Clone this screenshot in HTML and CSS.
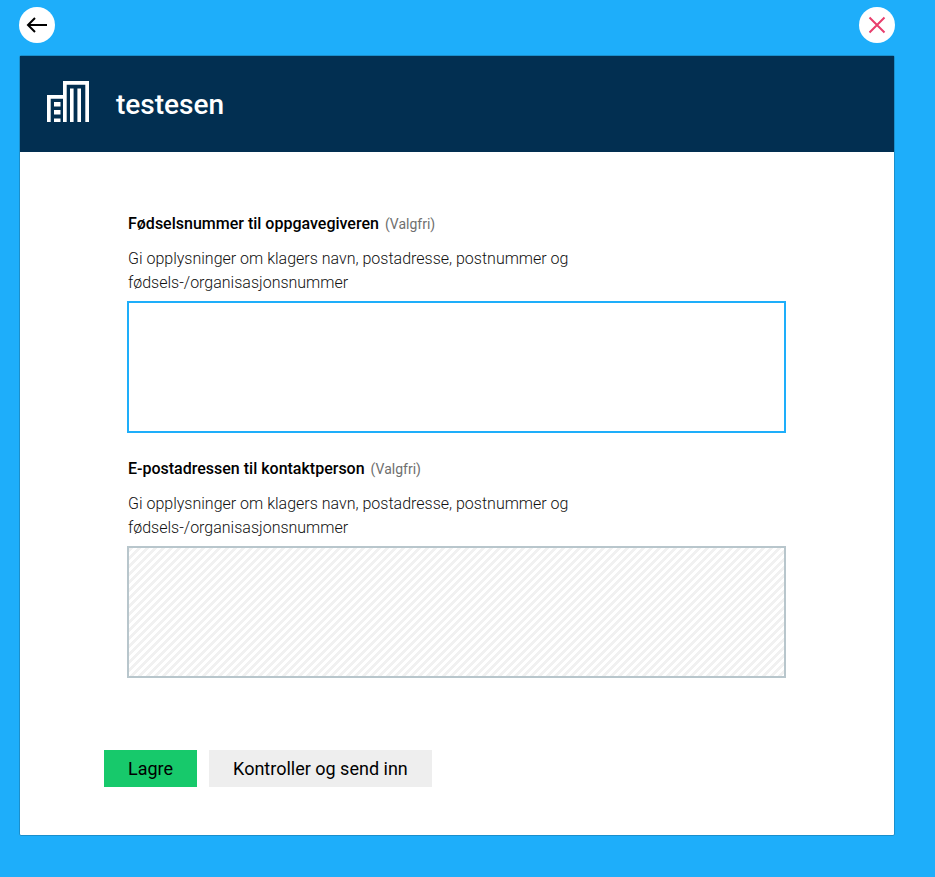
FILE: index.html
```
<!DOCTYPE html>
<html lang="no">
<head>
<meta charset="utf-8">
<title>testesen</title>
<link rel="stylesheet" href="styles.css">
</head>
<body>
<div class="page">
  <div class="topbar">
    <button class="round-btn" aria-label="Tilbake">
      <svg width="24" height="24" viewBox="0 0 24 24" fill="none" stroke="#000" stroke-width="2"><path d="M22 12H3M10 5l-7 7 7 7"/></svg>
    </button>
    <button class="round-btn" aria-label="Lukk">
      <svg width="20" height="20" viewBox="0 0 20 20" fill="none" stroke="#e83e6c" stroke-width="2"><path d="M2.5 2.5l15 15M17.5 2.5l-15 15"/></svg>
    </button>
  </div>
  <main class="panel">
    <header class="panel-head">
      <svg class="logo" width="42" height="41" viewBox="0 0 42 41" fill="#fff"><path d="M16 0h26v41h-3.700V3.700H19.700V41H16zM23 7.500h3.600V41H23zM30.400 7.500H34V41h-3.600zM0 14h16v3.700H3.700V41H0zM7 21h6.500v4.500H7zM7 29h6.500v4.500H7zM7 37.500h6.500V41H7z"/></svg>
      <h1 class="title">testesen</h1>
    </header>
    <div class="content">
      <section class="field">
        <div class="label-row"><label class="label">Fødselsnummer til oppgavegiveren</label><span class="optional">(Valgfri)</span></div>
        <p class="help">Gi opplysninger om klagers navn, postadresse, postnummer og<br>fødsels-/organisasjonsnummer</p>
        <textarea class="box box-active"></textarea>
      </section>
      <section class="field">
        <div class="label-row"><label class="label">E-postadressen til kontaktperson</label><span class="optional">(Valgfri)</span></div>
        <p class="help">Gi opplysninger om klagers navn, postadresse, postnummer og<br>fødsels-/organisasjonsnummer</p>
        <textarea class="box box-disabled" disabled></textarea>
      </section>
      <div class="actions">
        <button class="btn btn-primary">Lagre</button>
        <button class="btn btn-secondary">Kontroller og send inn</button>
      </div>
    </div>
  </main>
</div>
</body>
</html>
```
FILE: styles.css
```
* { box-sizing: border-box; }
html, body { margin: 0; height: 100%; }
body {
  background: #1eaefa;
  font-family: Roboto, "Liberation Sans", sans-serif;
  color: #000;
  overflow: hidden;
}
.page { width: 895px; padding: 7px 0 0 19px; }
.topbar { display: flex; justify-content: space-between; height: 48px; }
.round-btn {
  width: 36px; height: 36px; padding: 0; border: 0; border-radius: 50%;
  background: #fff; display: flex; align-items: center; justify-content: center;
}
.panel {
  width: 876px; height: 781px; background: #fff;
  border: 1px solid #1a8fcc; border-radius: 2px;
}
.panel-head {
  height: 96px; background: #022f51; color: #fff;
  display: flex; align-items: center; padding: 0 0 0 27px; gap: 27px;
  margin: 0;
}
.logo { flex: none; margin-bottom: 5px; }
.title { margin: 2px 0 0; font-size: 28px; font-weight: 500; line-height: 32px; }
.content { padding: 60px 0 0 108px; }
.field { width: 658px; margin-bottom: 24px; }
.label-row { display: flex; align-items: baseline; gap: 6px; line-height: 24px; }
.label { font-size: 16px; font-weight: 500; }
.optional { font-size: 14px; color: #6f6f6f; }
.help { margin: 11px 0 6px; font-size: 16px; font-weight: 300; line-height: 24px; color: #111; }
.box { display: block; width: 659px; height: 132px; margin-left: -1px; resize: none; border-radius: 0; padding: 0; outline: 0; }
.box-active { border: 2px solid #1eaefa; background: #fff; }
.box-disabled {
  border: 2px solid #b8c6cc;
  background: repeating-linear-gradient(135deg, #f1f1f1 0 2.83px, #fff 2.83px 5.66px);
}
.actions { display: flex; gap: 12px; margin: 72px 0 0 -24px; }
.btn { height: 37px; border: 0; padding: 0 24px; font: 400 18px Roboto, "Liberation Sans", sans-serif; color: #000; border-radius: 0; }
.btn-primary { background: #17c96b; }
.btn-secondary { background: #eeeeee; }
```
